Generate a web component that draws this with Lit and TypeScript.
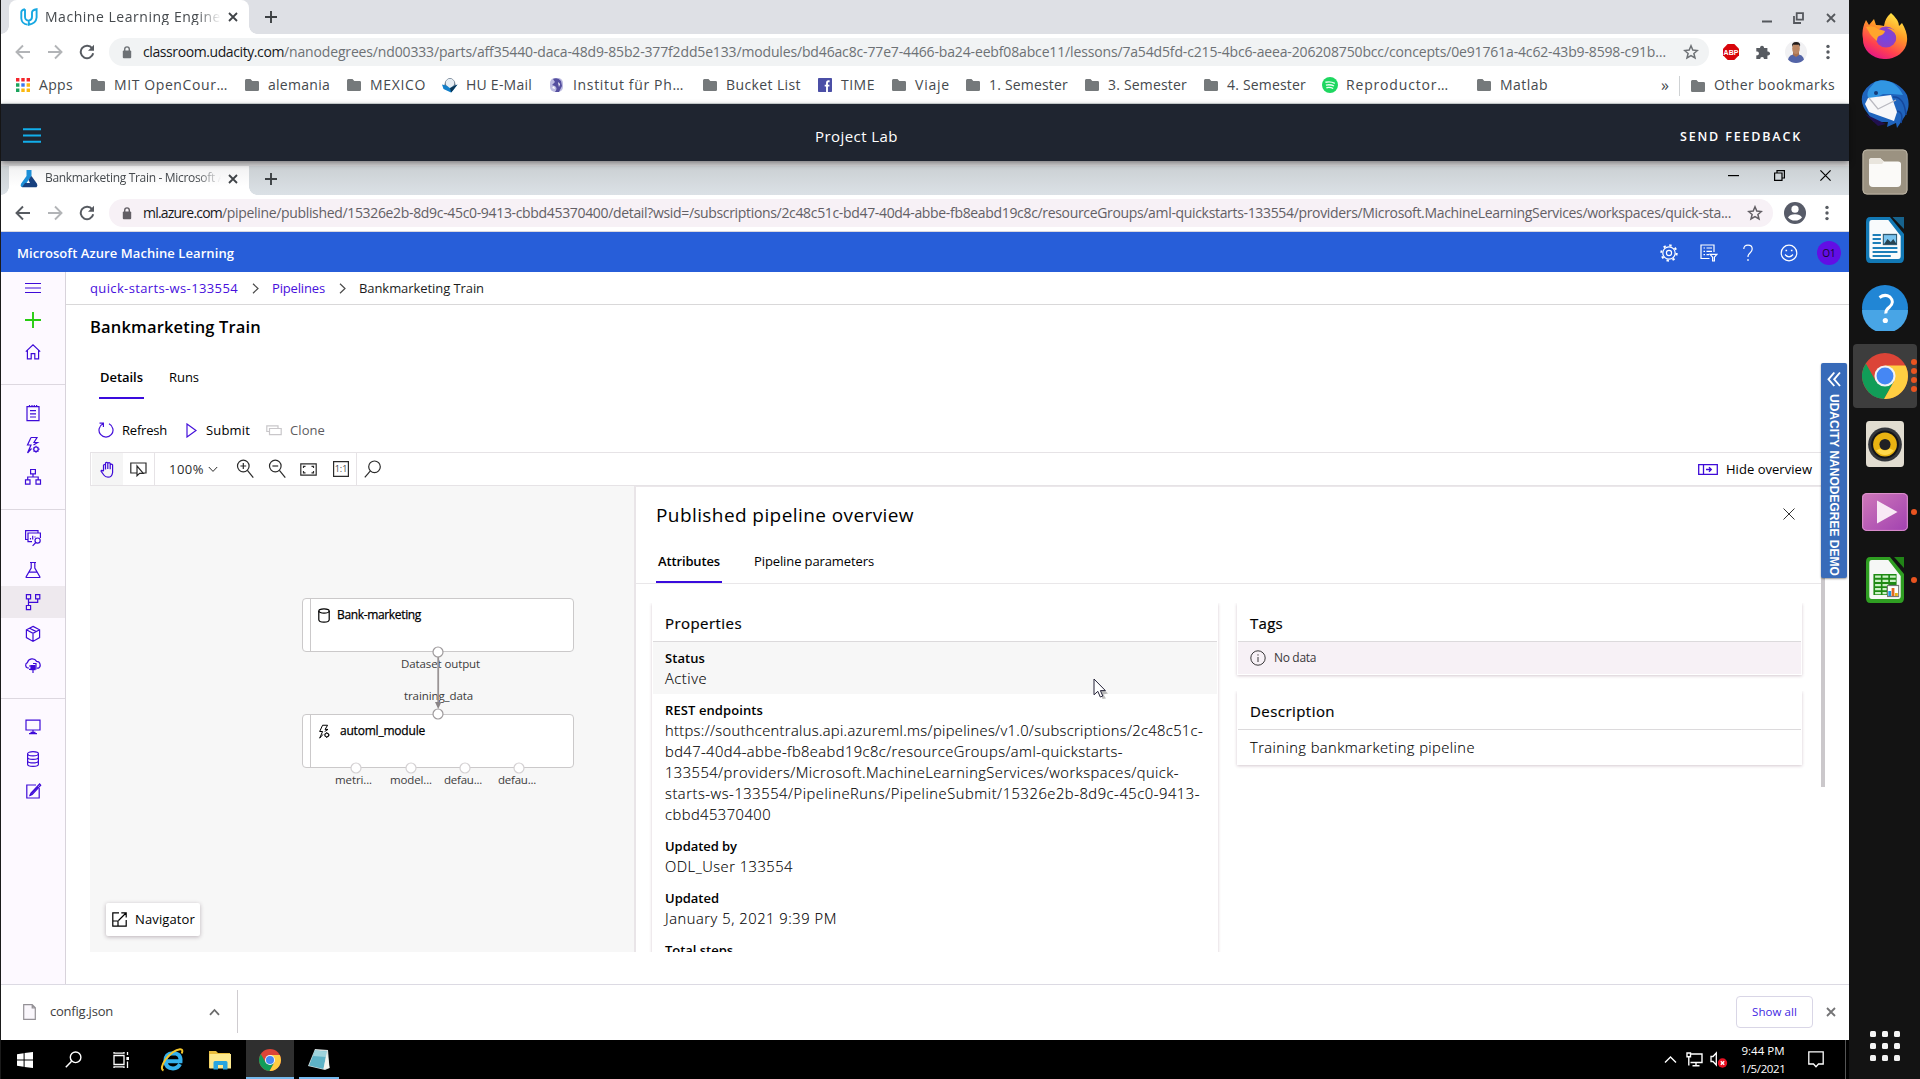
import { LitElement, html, css, svg, SVGTemplateResult, nothing } from "lit";
import { customElement, property } from "lit/decorators.js";

/** One line of text whose tracking is spread so that it fills a given width. */
@customElement("fit-text")
export class FitText extends LitElement {
  @property({ type: Number }) w = 0;
  static styles = css`
    :host { display: inline-block; white-space: pre; flex: none; }
  `;
  render() {
    return html`<slot></slot>`;
  }
  firstUpdated() {
    const count = (this.textContent ?? "").length;
    const natural = this.getBoundingClientRect().width;
    if (this.w && count) {
      this.style.letterSpacing = `${(this.w - natural) / count}px`;
    }
  }
}

const fit = (text: string, w: number, cls = "") =>
  html`<fit-text class=${cls} w=${w}>${text}</fit-text>`;

const icon = (w: number, h: number, body: SVGTemplateResult, cls = "") =>
  html`<svg class="ic ${cls}" width=${w} height=${h} viewBox="0 0 ${w} ${h}" fill="none" stroke="currentColor" stroke-width="1.2">${body}</svg>`;

const art = (size: number, w: number, h: number, body: SVGTemplateResult, cls = "") =>
  html`<svg class="ic ${cls}" width=${w} height=${h} viewBox="0 0 ${size} ${size}" preserveAspectRatio="none">${body}</svg>`;

const closeX = icon(12, 12, svg`<path d="M2 2 10 10M10 2 2 10" stroke-width="1.8"/>`);
const plus = icon(14, 14, svg`<path d="M7 1V13M1 7H13" stroke-width="1.9"/>`);
const back = icon(16, 16, svg`<path d="M15 8H2M8 1.5 1.5 8 8 14.5" stroke-width="1.9"/>`);
const forward = icon(16, 16, svg`<path d="M1 8H14M8 1.5 14.5 8 8 14.5" stroke-width="1.9"/>`);
const reload = icon(16, 16, svg`<path d="M13.2 4.3A6.3 6.3 0 1 0 14.2 9.3" stroke-width="2"/><path d="M15 .8V6.8H9Z" fill="currentColor" stroke="none"/>`);
const lock = icon(10, 13, svg`<rect x=".8" y="4.6" width="8.4" height="7.6" rx="1" fill="currentColor" stroke="none"/><path d="M2.7 5V3.2a2.3 2.3 0 0 1 4.6 0V5" stroke-width="1.4"/>`);
const star = icon(16, 16, svg`<path d="M8 1.8 9.8 6.1 14.4 6.5 10.9 9.5 12 14 8 11.6 4 14 5.1 9.5 1.6 6.5 6.2 6.1Z" stroke-width="1.5"/>`);
const dots = icon(4, 16, svg`<g fill="currentColor" stroke="none"><circle cx="2" cy="2.4" r="1.7"/><circle cx="2" cy="8" r="1.7"/><circle cx="2" cy="13.6" r="1.7"/></g>`);
const folder = icon(14, 12, svg`<path d="M0 1.5Q0 0 1.3 0H5.5L7.3 1.9H12.7Q14 1.9 14 3.2V10.7Q14 12 12.7 12H1.3Q0 12 0 10.7Z" fill="#75797b" stroke="none"/>`);
const chrome = (w: number, h: number) => art(48, w, h, svg`
  <circle cx="24" cy="24" r="24" fill="#dc4437"/>
  <path d="M4 11 14.5 29.5 33.5 29.5 23 48A24 24 0 0 1 4 11Z" fill="#119d58"/>
  <path d="M24 13H45.3A24 24 0 0 1 23 48L33.5 29.5Z" fill="#ffce42"/>
  <circle cx="24" cy="24" r="11" fill="#f3f3f3"/><circle cx="24" cy="24" r="8.8" fill="#4587f4"/>`);

const bookmarkIcons: Record<string, unknown> = {
  folder,
  apps: icon(14, 14, svg`<g stroke="none"><path d="M0 0h3.4v3.4H0zM5.3 0h3.4v3.4H5.3zM10.6 0H14v3.4h-3.4z" fill="#f4252b"/><path d="M0 5.3h3.4v3.4H0zM0 10.6h3.4V14H0z" fill="#1ba35c"/><path d="M5.3 5.3h3.4v3.4H5.3z" fill="#3b78ee"/><path d="M10.6 5.3H14v3.4h-3.4zM5.3 10.6h3.4V14H5.3zM10.6 10.6H14V14h-3.4z" fill="#fbb80f"/></g>`),
  mail: icon(16, 16, svg`<g stroke="none"><path d="M3 5Q8-3 13 5L14 10H2Z" fill="#66788a"/><circle cx="8" cy="6" r="4.3" fill="#e6edf3"/><path d="M0 7.5 4 8.5 8 11 15.5 7.5 11 13.5 9 15.5 1.5 12Z" fill="#117fca"/><path d="M8 11 15.5 7.5 9.2 15.6Z" fill="#0b3554"/></g>`),
  seal: icon(15, 16, svg`<g stroke="none"><rect x="1" y="1" width="13" height="14" rx="5" fill="#bdbbe0"/><path d="M4 2Q9 0 12 4L13 9 10 15H6Q9 11 6 9L3 8 6 5Z" fill="#554f9f"/><path d="M3 11 5 9 6 12ZM9 5l2 2-1 3z" fill="#fff"/></g>`),
  facebook: icon(14, 14, svg`<rect width="14" height="14" rx=".8" fill="#4b4fa6" stroke="none"/><path d="M11.6 3.2H10.5Q9 3.2 9 4.8V14M6.7 7.6H11.4" stroke="#fff" stroke-width="1.9"/>`),
  spotify: icon(16, 16, svg`<circle cx="8" cy="8" r="8" fill="#1ed760" stroke="none"/><path d="M3.4 5.3Q8.5 4 12.8 6.3M3.9 8.1Q8.3 7 12 9M4.4 10.7Q8 9.8 11.2 11.5" stroke="#e9fff0" stroke-width="1.4"/>`),
};

interface Bookmark { icon: string; text: string; w: number; cell: number; }
const bookmarks: Bookmark[] = [
  { icon: "apps", text: "Apps", w: 34, cell: 75 },
  { icon: "folder", text: "MIT OpenCour…", w: 114, cell: 154 },
  { icon: "folder", text: "alemania", w: 62, cell: 102 },
  { icon: "folder", text: "MEXICO", w: 56, cell: 95 },
  { icon: "mail", text: "HU E-Mail", w: 66, cell: 107 },
  { icon: "seal", text: "Institut für Ph…", w: 111, cell: 154 },
  { icon: "folder", text: "Bucket List", w: 75, cell: 115 },
  { icon: "facebook", text: "TIME", w: 34, cell: 74 },
  { icon: "folder", text: "Viaje", w: 35, cell: 74 },
  { icon: "folder", text: "1. Semester", w: 79, cell: 119 },
  { icon: "folder", text: "3. Semester", w: 79, cell: 119 },
  { icon: "folder", text: "4. Semester", w: 79, cell: 118 },
  { icon: "spotify", text: "Reproductor…", w: 103, cell: 155 },
  { icon: "folder", text: "Matlab", w: 48, cell: 100 },
];

const bolt = svg`<path d="M7 1.5H13L10 6.5H13.5L9.5 9M7 1.5 3.5 9H7L3.5 17M3.5 17 7.5 12.5"/><circle cx="12" cy="13.2" r="2.2"/><path d="M12 9.8v1.2M12 15.4v1.4M8.8 13.2h1M14.2 13.2h1.4M9.8 11l.8.8M13.5 14.7l.9.9M14.3 10.9l-.8.8M10.4 14.8l-.8.8"/>`;

const navGroups: { body: SVGTemplateResult; cls?: string }[][] = [
  [
    { body: svg`<path d="M1 4.5H17M1 9H17M1 13.5H17"/>` },
    { body: svg`<path d="M9 1V17M1 9H17" stroke-width="1.9"/>`, cls: "add" },
    { body: svg`<path d="M1.8 8.6 9 1.8 16.2 8.6M3.4 7.4V15.8H7.2V10.6H10.8V15.8H14.6V7.4"/>` },
  ],
  [
    { body: svg`<path d="M3 2.6H15V16.6H3ZM5.5 1V3M8 1V3M10.3 1V3M12.6 1V3M6 6.6H12M6 9.8H12M6 13H12"/>` },
    { body: bolt },
    { body: svg`<path d="M6.6 1.5H11.4V5.8H6.6ZM1.5 11.8H6V16.2H1.5ZM12 11.8H16.5V16.2H12ZM9 5.8V9M3.7 11.8V9H14.2V11.8"/>` },
  ],
  [
    { body: svg`<path d="M3.5 10.5H1.6V1.6H14V3.6M8 12.6H4V4H16.4V9M6.5 10.6V9M8.7 10.6V6.8M11 8.6V7.6"/><circle cx="13.6" cy="11.6" r="2.6"/><path d="M11.8 13.5 8.6 16.8"/>` },
    { body: svg`<path d="M6 1.5H12M7.2 1.5V7L2.2 15.6V16.5H15.8V15.6L10.8 7V1.5M5 11.2H13"/>` },
    { body: svg`<path d="M2.4 1.7H6.6V5.9H2.4ZM11.6 1.7H15.8V5.9H11.6ZM2.4 12.5H6.6V16.7H2.4ZM4.5 5.9V12.5M4.5 9.4H13.7V5.9"/>`, cls: "current" },
    { body: svg`<path d="M9 1.4 15.6 4.8V12.6L9 16.4 2.4 12.6V4.8ZM2.4 4.8 9 8.3 15.6 4.8M9 8.3V16.4M5.6 3.2 12.3 6.6"/>` },
    { body: svg`<path d="M5 11H3.6A2.9 2.9 0 0 1 3.4 5.6 5 5 0 0 1 12.6 4.4 3.7 3.7 0 0 1 14.5 11.2H13"/><rect x="7" y="8.6" width="4" height="4" fill="currentColor"/><path d="M5 9H9M5 12.3H9V16M9 6.5H12V12.5"/>` },
  ],
  [
    { body: svg`<path d="M2 2.2H16V12H2ZM9 12V14.5M5 15.6H13M6.5 14.3H11.5"/>` },
    { body: svg`<ellipse cx="9" cy="3.8" rx="5.4" ry="2.1"/><path d="M3.6 3.8V14.3A5.4 2.1 0 0 0 14.4 14.3V3.8M3.6 7.3A5.4 2.1 0 0 0 14.4 7.3M3.6 10.8A5.4 2.1 0 0 0 14.4 10.8"/>` },
    { body: svg`<path d="M12 3H2.8V16H15.2V6"/><path d="M15.6 2 7 11.2 6 13.5 8.2 12.6 16.7 3.2Z"/><path d="M6 13.5 14.2 4.8"/>` },
  ],
];

const magnifier = (inner: SVGTemplateResult | typeof nothing) =>
  icon(18, 20, svg`<circle cx="7.3" cy="7" r="5.8"/><path d="M11.4 11.4 17.3 18.6"/>${inner}`);

const dockIcons = [
  // Browser with the fox
  art(46, 46, 46, svg`<defs><linearGradient id="fx" x1=".8" y1="0" x2=".3" y2="1"><stop offset="0" stop-color="#fff04a"/><stop offset=".4" stop-color="#ff9a27"/><stop offset=".75" stop-color="#ff4050"/><stop offset="1" stop-color="#e31587"/></linearGradient><radialGradient id="fp"><stop offset="0" stop-color="#7047e8"/><stop offset="1" stop-color="#8f3fc4"/></radialGradient></defs>
    <path d="M29 0Q37 7 37 13L40 10Q46 20 45 28A22 19 0 0 1 1 26Q-1 17 4 7L7 12 12 6 14 12Q18 12 22 13Q23 5 29 0Z" fill="url(#fx)"/><circle cx="24" cy="24" r="10.5" fill="url(#fp)"/><path d="M4 14Q12 12 16 16L23 18Q22 22 17 23Q15 24 15 28 8 22 7 19ZM25 15Q36 15 35 27Q34 18 25 15Z" fill="#ffa52c"/>`),
  // Mail client
  art(48, 48, 48, svg`<path d="M20 0Q38 1 46 15Q50 27 44 36L36 48 35 43 26 47 27 42 13 42 7 34Q-2 23 2 13Q8 2 20 0Z" fill="#1f64bd"/><path d="M14 2Q32-4 42 15L31 14 22 14 10 20Q4 17 8 9Z" fill="#3196e3"/><path d="M7 18 30 15 36 32 33 41 8 32 4 24Z" fill="#f7f7f9"/><path d="M8 18 17 29 35 20" fill="none" stroke="#b9b9c0" stroke-width="1.3"/><path d="M4 34 25 44 17 46Z" fill="#21104f"/><path d="M32 17Q43 16 45 35M36 31Q43 32 40 43" fill="none" stroke="#15479c" stroke-width="1.5"/><circle cx="15" cy="13" r="2" fill="#163a77"/>`),
  // File manager
  art(46, 46, 46, svg`<rect x=".5" y=".5" width="45" height="45" rx="4.5" fill="#9b9281"/><rect x="1" y="1" width="44" height="44" rx="4" fill="none" stroke="#b9b1a1"/><path d="M7 12Q7 9 10 9H18L22 12.5H36Q39 12.5 39 15V34Q39 38 35 38H11Q7 38 7 34Z" fill="#fbfaf8"/><path d="M7 12Q7 9 10 9H18L22 12.5 20 15H7Z" fill="#e9e5dd"/>`),
  // Word processor
  art(46, 38, 46, svg`<path d="M5 0H29L46 17V41Q46 46 41 46H5Q0 46 0 41V5Q0 0 5 0Z" fill="#1279b5"/><path d="M5 3H27L42 19V39Q42 42 39 42H7Q4 42 4 39V6Q4 3 7 3Z" fill="#f8fbfc"/><path d="M32 0H46V12Z" fill="#17638d"/><path d="M8 18H18M8 22H18M8 26H18M8 31H38M8 35H38M8 39H30" stroke="#1d7fb9" stroke-width="1.8"/><rect x="21" y="17.5" width="16" height="10" fill="#7ac4ef" stroke="#315b72" stroke-width="1.3"/><path d="m22 27 4-5 4 3 3-3 4 5z" fill="#284351"/>`),
  // Help
  art(46, 46, 46, svg`<circle cx="23" cy="23" r="23" fill="#2186d5"/><path d="M0 25H46A23 23 0 0 1 0 25Z" fill="#48a5e6"/><path d="M17.5 12.5Q23 8.5 28 12 33 17 27.5 22 23.5 25 23.8 28.5" fill="none" stroke="#fff" stroke-width="3"/><circle cx="23.3" cy="35.5" r="2.6" fill="#fff"/>`),
  chrome(46, 46),
  // Music player
  art(46, 38, 46, svg`<rect width="46" height="46" rx="4" fill="#e2ddd1"/><g transform="translate(23 23.5) scale(1.2 1)"><circle r="17" fill="#34363b"/><circle r="14" fill="#151518"/><circle r="12" fill="#e9b312"/><circle r="5.6" fill="#202124"/><path d="M-9 6Q0 15 9 6L5 4Q0 8-5 4Z" fill="#ffd84c"/></g>`),
  // Video player
  art(46, 46, 38, svg`<defs><linearGradient id="vd" x1="0" y1="0" x2="1" y2="1"><stop offset="0" stop-color="#cf78ba"/><stop offset="1" stop-color="#a141b0"/></linearGradient></defs><rect width="46" height="46" rx="5" fill="url(#vd)"/><rect x=".7" y=".7" width="44.6" height="44.6" rx="4.5" fill="none" stroke="#df98cf"/><path d="M15 9 35.5 23 15 37Z" fill="#f8e9f5"/>`),
  // Spreadsheet
  art(46, 38, 46, svg`<path d="M5 0H29L46 17V41Q46 46 41 46H5Q0 46 0 41V5Q0 0 5 0Z" fill="#2f9e22"/><path d="M5 3H27L42 19V39Q42 42 39 42H7Q4 42 4 39V6Q4 3 7 3Z" fill="#f6f7f6"/><path d="M34 0H46V11Z" fill="#218417"/><rect x="9" y="17" width="28" height="21" fill="#1e8a13"/><path d="M11 18.5h7v2.3h-7zM20 18.5h7v2.3h-7zM29 18.5h7v2.3h-7zM11 22.7h7V25h-7zM20 22.7h7V25h-7zM29 22.7h7V25h-7zM11 27h7v2.2h-7zM20 27h7v2.2h-7zM11 31h7v2.2h-7zM20 31h5v2.2h-5zM11 35h7v2.2h-7zM20 35h5v2.2h-5z" fill="#cdf2c8"/><rect x="26" y="28.5" width="13.5" height="11" fill="#fff" stroke="#777" stroke-width="1.2"/><path d="M27 34h3.5v5H27z" fill="#1d93dc"/><path d="M31 31h3.4v8H31z" fill="#df6b25"/><path d="M35 36h3.5v3H35z" fill="#e8b315"/>`),
];

const endpointLines: [string, number][] = [
  ["https://southcentralus.api.azureml.ms/pipelines/v1.0/subscriptions/2c48c51c-", 538],
  ["bd47-40d4-abbe-fb8eabd19c8c/resourceGroups/aml-quickstarts-", 458],
  ["133554/providers/Microsoft.MachineLearningServices/workspaces/quick-", 514],
  ["starts-ws-133554/PipelineRuns/PipelineSubmit/15326e2b-8d9c-45c0-9413-", 535],
  ["cbbd45370400", 106],
];

const properties: { name: string; nw: number; lines: [string, number][] }[] = [
  { name: "Status", nw: 40, lines: [["Active", 42]] },
  { name: "REST endpoints", nw: 98, lines: endpointLines },
  { name: "Updated by", nw: 72, lines: [["ODL_User 133554", 128]] },
  { name: "Updated", nw: 54, lines: [["January 5, 2021 9:39 PM", 172]] },
  { name: "Total steps", nw: 68, lines: [] },
];

@customElement("app-root")
export class AppRoot extends LitElement {
  static styles = css`
    :host { display: block; width: 1920px; height: 1079px; overflow: hidden; font-family: "Open Sans", "Noto Sans", sans-serif; font-size: 13px; line-height: 1.2; color: #000; }
    * { box-sizing: border-box; }
    .ic { display: block; flex: none; }
    .screen { display: flex; height: 1079px; }
    .desktop { position: relative; width: 1849px; height: 1079px; border-left: 1px solid #1b1b1b; display: flex; flex-direction: column; background: #fff; }
    .row { display: flex; align-items: center; }

    /* browser frames */
    .strip { display: flex; height: 34px; flex: none; background: #dee0e5; padding-left: 8px; }
    .tab { position: relative; width: 240px; background: #fff; border-radius: 8px 8px 0 0; display: flex; align-items: center; padding-left: 11px; color: #45494d; }
    .tab::before, .tab::after { content: ""; position: absolute; bottom: 0; width: 8px; height: 8px; }
    .tab::before { left: -8px; background: radial-gradient(circle at 0 0, transparent 7.5px, #fff 8px); }
    .tab::after { right: -8px; background: radial-gradient(circle at 100% 0, transparent 7.5px, #fff 8px); }
    .tab-title { margin-left: 7px; width: 176px; overflow: hidden; font-size: 14px; -webkit-mask-image: linear-gradient(90deg, #000 86%, transparent 100%); }
    .tab-close { margin-left: 6px; color: #3f4347; }
    .new-tab { align-self: center; margin-left: 15px; color: #3c4043; }
    .win { margin-left: auto; display: flex; align-items: center; color: #55585d; }
    .outer .win { gap: 20px; padding-right: 12px; padding-top: 1px; }
    .inner .strip { height: 29px; background: linear-gradient(#cbd0d3, #dbe1e6); }
    .inner .tab { border-radius: 0; background: linear-gradient(#f1f1f2, #fff 70%); }
    .inner .tab-title { font-size: 12px; }
    .inner .tab, .inner .new-tab { padding-bottom: 4px; }
    .inner .win { gap: 35px; padding: 0 18px 11px 0; color: #000; }
    .bar { display: flex; align-items: center; height: 36px; flex: none; padding-left: 14px; color: #575b61; }
    .nav-btns { display: flex; gap: 16px; width: 94px; }
    .dim { opacity: .45; }
    .pill { display: flex; align-items: center; height: 28px; width: 1600px; border-radius: 14px; background: #f1f3f4; padding: 0 10px 0 13px; font-size: 14px; color: #6d7175; }
    .pill .host { color: #16181b; margin-left: 11px; }
    .pill > :last-child { margin-left: auto; }
    .inner .bar { height: 37px; border-bottom: 1px solid #d9d8df; }
    .inner .pill { width: 1664px; background: #f7f1f6; color: #635f65; }
    .extras { display: flex; align-items: center; margin-left: 14px; }
    .abp { width: 16px; height: 16px; margin-right: 16px; }
    .bookmarks { display: flex; height: 34px; flex: none; align-items: center; padding: 0 0 2px 15px; font-size: 14px; color: #45494d; border-bottom: 1px solid #d4dadb; }
    .bm { display: flex; align-items: center; gap: 9px; }
    .bm.wide { gap: 8px; }
    .bm:first-child { gap: 9px; }
    .more { margin-left: 84px; width: 18px; font-size: 16px; }
    .other { display: flex; align-items: center; gap: 9px; border-left: 1px solid #cfd2d4; padding-left: 11px; height: 20px; }
    .lab { position: relative; display: grid; grid-template-columns: 1fr 1fr 1fr; align-items: center; height: 57px; flex: none; background: #1f2530; color: #fff; padding: 6px 47px 0 22px; box-shadow: 0 2px 6px rgba(0,0,0,.45); z-index: 1; }
    .lab .mid { justify-self: start; margin-left: 199px; font-size: 15px; }
    .lab .end { justify-self: end; font-weight: 600; font-size: 12.5px; padding-top: 1px; }
    .lab-gap { height: 5px; flex: none; background: #d7d6d8; }

    /* azure */
    .azure { display: flex; align-items: center; height: 40px; flex: none; background: #275ed9; color: #fff; padding: 1px 8px 0 16px; }
    .azure .brand { font-weight: 600; font-size: 13px; padding-top: 2px; }
    .azure .tools { margin-left: auto; display: flex; align-items: center; }
    .avatar { width: 24px; height: 24px; border-radius: 50%; background: #620ee5; color: #14062d; font-size: 10px; display: flex; align-items: center; justify-content: center; }
    .body { display: flex; height: 712px; flex: none; }
    .side { width: 65px; background: #fdf9ff; border-right: 1px solid #d8d3db; color: #3e0bd8; }
    .group { padding: 12px 0 16px; border-bottom: 1px solid #ddd8e0; }
    .group:first-child { padding-top: 0; }
    .group:last-child { border-bottom: 0; }
    .side-item { height: 32px; display: flex; align-items: center; justify-content: center; }
    .side-item.add { color: #27cc11; }
    .side-item.current { background: #eee9ee; }
    .main { flex: 1; min-width: 0; display: flex; flex-direction: column; }
    .crumbs { display: flex; align-items: center; height: 33px; border-bottom: 1px solid #d9d8d9; padding: 1px 0 0 24px; font-size: 13px; color: #1c1c1c; }
    .crumbs .link { color: #4710dc; }
    .crumbs .sep { margin: 0 13px 0 14px; color: #4a4a4a; }
    .page { padding: 0 28px 0 24px; }
    h1, h2, h3 { margin: 0; font-weight: 600; }
    h1 { display: flex; align-items: center; height: 44px; font-size: 16.5px; }
    .tabs { display: flex; }
    .page-tabs { height: 50px; padding-left: 9px; gap: 25px; }
    .page-tabs > div { display: flex; align-items: center; padding-top: 8px; }
    .page-tabs .on { width: 45px; padding-left: 1px; font-weight: 600; box-shadow: inset 0 -2px #3a0bdd; }
    .actions { height: 53px; padding: 10px 0 0 8px; display: flex; align-items: center; }
    .actions svg { color: #4410da; }
    .actions .off, .actions .off svg { color: #5e5c5f; }
    .actions .off svg { color: #c9c7ca; }
    .g-tools { display: flex; align-items: center; height: 34px; border: solid #e6e3e6; border-width: 1px 0 1px 1px; color: #2b2b2b; }
    .g-tools .hand { display: flex; align-items: center; justify-content: center; height: 32px; width: 31px; margin-left: 1px; background: #f5f5f5; color: #3e0bd8; }
    .g-tools fit-text { padding-top: 2px; }
    .vline { width: 1px; height: 32px; background: #e6e3e6; }
    .hide { margin-left: auto; display: flex; align-items: center; gap: 8px; padding-right: 9px; color: #000; }
    .work { display: flex; height: 466px; }
    .canvas { position: relative; width: 544px; background: #f7f7f7; }
    .canvas > * { position: absolute; }
    .node { width: 272px; height: 54px; left: 212px; background: #fff; border: 1px solid #cbc9ca; border-radius: 4px; display: flex; font-size: 12px; padding-left: 7px; }
    .node .inner-node { border-left: 1px solid #cbc9ca; flex: 1; display: flex; height: 52px; padding: 9px 0 0 7px; gap: 7px; align-items: flex-start; -webkit-text-stroke: .25px; }
    .n1 { top: 112px; } .n2 { top: 228px; }
    .wires { left: 0; top: 0; }
    .lb { font-size: 11.5px; color: #3c3c3c; line-height: 14px; }
    .l1 { left: 311px; top: 171px; } .l2 { left: 314px; top: 203px; }
    .p1 { left: 245px; top: 287px; } .p2 { left: 300px; top: 287px; } .p3 { left: 354px; top: 287px; } .p4 { left: 408px; top: 287px; }
    .navigator { left: 16px; top: 417px; width: 94px; height: 33px; background: #fff; border-radius: 2px; box-shadow: 0 1px 4px rgba(60,30,50,.32); display: flex; align-items: center; gap: 8px; padding-left: 6px; }
    .panel { flex: 1; border-left: 2px solid #e9e5e8; border-top: 1px solid #ebe7ea; background: #fff; overflow: hidden; }
    .panel-head { height: 57px; display: flex; align-items: center; justify-content: space-between; padding: 0 26px 0 20px; }
    .panel-head .ic { margin-bottom: 4px; }
    h2 { font-size: 19px; font-weight: 500; }
    .panel-tabs { height: 40px; border-bottom: 1px solid #e9e7e9; padding-left: 20px; gap: 32px; font-size: 13px; }
    .panel-tabs > div { display: flex; align-items: center; padding-bottom: 4px; }
    .panel-tabs .on { width: 66px; padding-left: 2px; font-weight: 600; box-shadow: inset 0 -2px #3a0bdd; }
    .cards { display: grid; grid-template-columns: 566px 565px; gap: 19px; padding: 19px 0 0 16px; align-items: start; }
    .card-props { min-height: 360px; }
    .stack { display: grid; gap: 16px; }
    .card { background: #fff; padding: 0 1px 1px; box-shadow: 0 1px 3px rgba(80,30,60,.24); clip-path: inset(0 -4px -5px -4px); }
    h3 { height: 39px; display: flex; align-items: center; padding-left: 12px; border-bottom: 1px solid #dcdadc; font-size: 15px; font-weight: 500; -webkit-text-stroke: .2px; padding-top: 1px; }
    .prop { padding: 7px 0 0 12px; height: 52px; }
    .prop.long { height: 136px; }
    .prop:first-of-type { background: #f7f7f7; }
    .prop .name { display: block; height: 19px; line-height: 19px; font-size: 13px; font-weight: 600; }
    .prop .line, .desc { display: block; height: 21px; line-height: 21px; font-size: 14.7px; font-weight: 300; color: #000; -webkit-text-stroke: .12px; }
    .none { display: flex; align-items: center; gap: 8px; padding-left: 12px; height: 32px; background: #f7f1f6; font-size: 12px; color: #3a383a; }
    .descbox { height: 34px; padding: 7px 0 0 12px; }
    .scroll { position: absolute; left: 1820px; top: 570px; width: 4px; height: 217px; background: #cbc8cb; }
    .demo { position: absolute; left: 1820px; top: 363px; width: 26px; height: 215px; background: #386bb9; border-radius: 2px; color: #fff; display: flex; flex-direction: column; align-items: center; padding-top: 8px; gap: 6px; box-shadow: 0 1px 2px rgba(0,0,0,.4); }
    .demo span { writing-mode: vertical-rl; font: 700 12px/14px "Liberation Sans", Arial, sans-serif; white-space: nowrap; }
    .pointer { position: absolute; left: 1092px; top: 678px; }

    .downloads { display: flex; align-items: center; height: 56px; flex: none; border-top: 1px solid #dcdae3; padding: 0 12px 2px 22px; }
    .file { display: flex; align-items: center; width: 215px; height: 43px; border-right: 1px solid #cfccd0; color: #3e3e40; font-size: 13px; padding-right: 17px; }
    .file fit-text { margin-left: 14px; }
    .file > :last-child { margin-left: auto; }
    .show-all { margin-left: auto; margin-right: 12px; width: 77px; height: 32px; border: 1px solid #d9d6e6; border-radius: 4px; color: #4127e2; font-size: 11.5px; display: flex; align-items: center; justify-content: center; }
    .close-bar { color: #747476; }
    .taskbar { display: flex; height: 39px; flex: none; background: #000; color: #fff; align-items: center; }
    .task { display: flex; align-items: center; justify-content: center; width: 48px; height: 39px; }
    .task.first-app { margin-left: 3px; }
    .task.on { background: #2f2f2f; border-bottom: 2px solid #76b9ed; padding-top: 2px; margin-left: 2px; }
    .task.run { width: 40px; margin-left: 5px; border-bottom: 2px solid #76b9ed; padding-top: 2px; }
    .tray { margin-left: auto; display: flex; align-items: center; height: 39px; }
    .clock { width: 60px; display: flex; flex-direction: column; align-items: center; font-size: 11.5px; line-height: 18px; margin: 0 15px 0 5px; }
    .peek { width: 4px; height: 39px; border-left: 1px solid #555; margin-left: 21px; }

    .dock { width: 71px; height: 1079px; background: #131313; display: flex; flex-direction: column; padding: 3.5px 0 0 4px; flex: none; }
    .slot { position: relative; width: 64px; height: 64px; margin-bottom: 4.1px; display: flex; align-items: center; justify-content: center; border-radius: 4px; flex: none; }
    .slot.on { background: #3d3d3d; }
    .pips { position: absolute; right: 0; top: 0; height: 64px; display: flex; flex-direction: column; justify-content: center; gap: 3px; }
    .pips i { width: 6px; height: 6px; border-radius: 50%; background: #e95420; display: block; }
    .launcher { margin: auto 0 18px 17px; display: grid; grid-template-columns: repeat(3, 6px); gap: 6px; }
    .launcher i { width: 6px; height: 6px; border-radius: 1.5px; background: #f3f3f3; }
  `;

  private outer() {
    return html`<div class="outer">
      <div class="strip">
        <div class="tab">
          ${icon(18, 18, svg`<path d="M5 1.2Q1.3 2 1.3 4V10.5Q1.8 16 7.5 16.6M5 1.2V9Q5.3 12.6 8.8 12.6 12 12 12 9V4.5Q12 2 16.6 1.2V9.5Q16 15.5 8.8 16.8V12.8" stroke="#17a8e2" stroke-width="1.9"/>`)}
          <div class="tab-title">${fit("Machine Learning Engine", 176)}</div>
          <span class="tab-close">${closeX}</span>
        </div>
        <span class="new-tab">${plus}</span>
        <div class="win">
          ${icon(12, 12, svg`<path d="M1 9.5H11" stroke-width="2"/>`)}
          ${icon(12, 12, svg`<path d="M3.7 1.2H10V7.7H3.7ZM1 4V11H8" stroke-width="1.8"/>`)}
          ${closeX}
        </div>
      </div>
      <div class="bar">
        <div class="nav-btns"><span class="dim">${back}</span><span class="dim">${forward}</span>${reload}</div>
        <div class="pill">${lock}${fit("classroom.udacity.com", 141, "host")}${fit("/nanodegrees/nd00333/parts/aff35440-daca-48d9-85b2-377f2dd5e133/modules/bd46ac8c-77e7-4466-ba24-eebf08abce11/lessons/7a54d5fd-c215-4bc6-aeea-206208750bcc/concepts/0e91761a-4c62-43b9-8598-c91b…", 1382)}${star}</div>
        <div class="extras">
          <svg class="abp" viewBox="0 0 16 16"><path d="M4.7 0H11.3L16 4.7V11.3L11.3 16H4.7L0 11.3V4.7Z" fill="#d8050b"/><text x="8" y="10.7" text-anchor="middle" font-family="Liberation Sans" font-weight="700" font-size="7" fill="#fff">ABP</text></svg>
          ${icon(16, 16, svg`<path d="M1.3 4H5A2 2 0 1 1 9 3.6V4H12.4V7.6A2 2 0 1 1 12.4 11.4V15H9A1.8 1.8 0 1 0 5.2 15H1.3V11.3A2 2 0 1 0 1.3 7.5Z" fill="currentColor" stroke="none"/>`)}
          <svg class="ic photo" width="22" height="22" viewBox="0 0 22 22" style="margin:0 19px 0 14px"><defs><clipPath id="ph"><circle cx="11" cy="11" r="11"/></clipPath></defs><g clip-path="url(#ph)"><rect width="22" height="22" fill="#f1f1f3"/><path d="M3 22Q2 15 8 13.5H14Q20 15 19 22Z" fill="#5364a7"/><path d="M8 10H14V14L11 16 8 14Z" fill="#a97150"/><ellipse cx="11" cy="7.5" rx="3.8" ry="5.5" fill="#bc8764"/><path d="M7 6Q6.4 1 11.2 1T15 6L14 3.8H8Z" fill="#211b1a"/></g></svg>
          ${dots}
        </div>
      </div>
      <div class="bookmarks">
        ${bookmarks.map((b) => html`<div class="bm ${b.icon === "mail" || b.icon === "spotify" ? "wide" : ""}" style="width:${b.cell}px">${bookmarkIcons[b.icon]}${fit(b.text, b.w)}</div>`)}
        <span class="more">»</span>
        <div class="other">${folder}${fit("Other bookmarks", 121)}</div>
      </div>
    </div>`;
  }

  private inner() {
    return html`<div class="inner">
      <div class="strip">
        <div class="tab">
          ${icon(18, 18, svg`<g stroke="none"><path d="M6.5 0H11.5V6L8.5 10 4 17H1.5Q0 16 1 13.8L6.5 6Z" fill="#1c8fd8"/><path d="M11.5 6 17 13.8Q18 16 16.5 17.3H2L5 13H10L8.5 10 10 7.5Z" fill="#17407f"/></g>`)}
          <div class="tab-title">${fit("Bankmarketing Train - Microsoft A", 180)}</div>
          <span class="tab-close">${closeX}</span>
        </div>
        <span class="new-tab">${plus}</span>
        <div class="win">
          ${icon(11, 11, svg`<path d="M0 5.6H11" />`)}
          ${icon(11, 11, svg`<path d="M.6 3H8V10.4H.6ZM3 3V.6H10.4V8H8"/>`)}
          ${icon(11, 11, svg`<path d="M.4.4 10.6 10.6M10.6.4.4 10.6"/>`)}
        </div>
      </div>
      <div class="bar">
        <div class="nav-btns">${back}<span class="dim">${forward}</span>${reload}</div>
        <div class="pill">${lock}${fit("ml.azure.com", 79, "host")}${fit("/pipeline/published/15326e2b-8d9c-45c0-9413-cbbd45370400/detail?wsid=/subscriptions/2c48c51c-bd47-40d4-abbe-fb8eabd19c8c/resourceGroups/aml-quickstarts-133554/providers/Microsoft.MachineLearningServices/workspaces/quick-sta...", 1509)}${star}</div>
        <div class="extras" style="margin-left:11px">
          <svg class="ic" width="22" height="22" viewBox="0 0 22 22" style="margin-right:19px"><circle cx="11" cy="11" r="11" fill="#575b68"/><circle cx="11" cy="7.2" r="3.6" fill="#fff"/><path d="M4 15.5Q6 12.2 11 12.2T18 15.5Q15.5 18.6 11 18.6T4 15.5Z" fill="#fff"/></svg>
          ${dots}
        </div>
      </div>
    </div>`;
  }

  private azureBar() {
    return html`<div class="azure">
      ${fit("Microsoft Azure Machine Learning", 217, "brand")}
      <div class="tools">
        ${icon(18, 18, svg`<circle cx="9" cy="9" r="2.6"/><circle cx="9" cy="9" r="6.2"/><circle cx="9" cy="9" r="7.7" stroke-width="2" stroke-dasharray="2.4 3.65"/>`)}
        <span style="width:22px"></span>
        ${icon(18, 18, svg`<path d="M14 8V1H1V14.5H9.5M3.5 4H5M6.5 4H12M3.5 7.3H5M6.5 7.3H12M3.5 10.6H5M6.5 10.6H9M10 10.3H17L14.4 13.2V17H12.6V13.2Z"/>`)}
        <span style="width:24px"></span>
        ${icon(12, 18, svg`<path d="M1.8 5Q1.8 1.2 6 1.2T10.2 5Q10.2 7 8 9T6 13M6 15V17"/>`)}
        <span style="width:26px"></span>
        ${icon(18, 18, svg`<circle cx="9" cy="9" r="7.8"/><path d="M5 10.5Q9 15.2 13 10.5"/><path d="M6.3 5.7V7.3M11.7 5.7V7.3" stroke-width="1.6"/>`)}
        <span style="width:19px"></span>
        <div class="avatar">O1</div>
      </div>
    </div>`;
  }

  private canvas() {
    const port = (x: number, y: number, c: string) => svg`<circle cx=${x} cy=${y} r="5" fill="#fff" stroke=${c} stroke-width="1.2"/>`;
    return html`<div class="canvas">
      <div class="node n1"><div class="inner-node">${icon(12, 15, svg`<ellipse cx="6" cy="3" rx="5.2" ry="2.2"/><path d="M.8 3V11.8Q1 14.2 6 14.2T11.2 11.8V3"/>`)}${fit("Bank-marketing", 84)}</div></div>
      <div class="node n2"><div class="inner-node">${html`<svg class="ic" width="15" height="15" viewBox="2 0 17 18" fill="none" stroke="currentColor" stroke-width="1.2">${bolt}</svg>`}${fit("automl_module", 85)}</div></div>
      ${fit("Dataset output", 79, "lb l1")}${fit("training_data", 69, "lb l2")}
      ${fit("metri...", 37, "lb p1")}${fit("model...", 42, "lb p2")}${fit("defau...", 38, "lb p3")}${fit("defau...", 38, "lb p4")}
      <svg class="wires" width="544" height="466">
        <path d="M348.2 170V220" stroke="#9a9495" stroke-width="1.8"/><path d="M345 216H351.4L348.2 223Z" fill="#8a8587"/>
        ${port(348, 166, "#9f9b9d")}${port(348, 228, "#9f9b9d")}
        ${[266, 321, 375, 429].map((x) => port(x, 282, "#d4d1d3"))}
      </svg>
      <div class="navigator">${icon(15, 15, svg`<path d="M7 .8H.8V14.2H14.2V8M.8 9H6V14.2M6.5 8.5 14 1M9.3.8H14.2V5.6"/>`)}${fit("Navigator", 60)}</div>
    </div>`;
  }

  private panel() {
    return html`<div class="panel">
      <div class="panel-head"><h2>${fit("Published pipeline overview", 258)}</h2>${icon(12, 12, svg`<path d="M.5.5 11.5 11.5M11.5.5.5 11.5" stroke="#333" stroke-width="1"/>`)}</div>
      <div class="tabs panel-tabs"><div class="on">${fit("Attributes", 62)}</div><div>${fit("Pipeline parameters", 120)}</div></div>
      <div class="cards">
        <div class="card card-props"><h3>${fit("Properties", 77)}</h3>
          ${properties.map((p) => html`<div class="prop ${p.lines.length > 1 ? "long" : ""}"><span class="name">${fit(p.name, p.nw)}</span>${p.lines.map(([t, w]) => html`<span class="line">${fit(t, w)}</span>`)}</div>`)}
        </div>
        <div class="stack">
          <div class="card"><h3>${fit("Tags", 33)}</h3><div class="none">${icon(16, 16, svg`<circle cx="8" cy="8" r="7.2" stroke-width="1"/><path d="M8 7V12M8 4.3V5.6" stroke-width="1"/>`)}${fit("No data", 42)}</div></div>
          <div class="card"><h3>${fit("Description", 85)}</h3><div class="descbox"><span class="desc">${fit("Training bankmarketing pipeline", 225)}</span></div></div>
        </div>
      </div>
    </div>`;
  }

  private page() {
    const sep = html`<span class="sep">${icon(7, 11, svg`<path d="M1 .8 6 5.5 1 10.2"/>`)}</span>`;
    const gap = (n: number) => html`<span style="width:${n}px"></span>`;
    return html`<div class="body">
      <div class="side">${navGroups.map((g) => html`<div class="group">${g.map((i) => html`<div class="side-item ${i.cls ?? ""}">${icon(18, 18, i.body)}</div>`)}</div>`)}</div>
      <div class="main">
        <div class="crumbs">${fit("quick-starts-ws-133554", 148, "link")}${sep}${fit("Pipelines", 53, "link")}${sep}${fit("Bankmarketing Train", 125)}</div>
        <div class="page">
          <h1>${fit("Bankmarketing Train", 171)}</h1>
          <div class="tabs page-tabs"><div class="on">${fit("Details", 43)}</div><div>${fit("Runs", 30)}</div></div>
          <div class="actions">
            ${icon(16, 17, svg`<path d="M5 1.8A7 7 0 1 0 11 1.8M1.5 1.2H5.4V5"/>`)}${gap(8)}${fit("Refresh", 45)}${gap(19)}
            ${icon(11, 15, svg`<path d="M1 1V14L10 7.5Z"/>`)}${gap(9)}${fit("Submit", 44)}${gap(16)}
            <span class="row off">${icon(16, 11, svg`<path d="M3 6.5H.8V.8H12V3M3.5 3.5H15.2V9.6H3.5Z"/>`)}${gap(8)}${fit("Clone", 35)}</span>
          </div>
          <div class="g-tools">
            <div class="hand">${icon(15, 17, svg`<path d="M3.5 10V4.2Q4.5 2.8 5.5 4.2V8.5M5.5 4.5V2Q6.7.6 7.8 2V8M7.8 2.3Q9 .8 10.2 2.3V8.3M10.2 3.8Q11.4 2.6 12.6 3.8V11.5Q12 16.2 8 16.2 5.2 16.2 3.8 14L1 10.2Q1.2 8.6 3.5 10.4"/>`)}</div>
            ${gap(7)}${icon(17, 15, svg`<path d="M7 11H.8V1H16V11H13.5M7 4V13.8L9.6 11.4H13.3Z"/>`)}${gap(7)}<span class="vline"></span>
            ${gap(14)}${fit("100%", 35)}${gap(4)}${icon(10, 7, svg`<path d="M.8 1 5 5.4 9.2 1" stroke-width="1"/>`)}
            ${gap(18)}${magnifier(svg`<path d="M4.4 7H10.2M7.3 4.1V9.9"/>`)}${gap(14)}${magnifier(svg`<path d="M4.4 7H10.2"/>`)}
            ${gap(14)}${icon(17, 13, svg`<path d="M.8.8H16.2V12.2H.8ZM3.5 5V3.3H5.5M11.5 3.3H13.5V5M13.5 8V9.8H11.5M5.5 9.8H3.5V8"/>`)}
            ${gap(16)}<svg class="ic" width="16" height="16" viewBox="0 0 16 16"><path d="M.6.6H15.4V15.4H.6Z" fill="none" stroke="#2b2b2b" stroke-width="1.2"/><text x="8" y="11.4" text-anchor="middle" font-family="Open Sans" font-size="9" fill="#444">1:1</text></svg>
            ${gap(7)}<span class="vline"></span>${gap(7)}
            ${icon(17, 18, svg`<circle cx="10.5" cy="6.8" r="5.8"/><path d="M6.4 10.9.8 17.4"/>`)}
            <div class="hide">${icon(20, 11, svg`<path d="M.7.7H19.3V10.3H.7ZM5.5.7V10.3M8 5.5H13M11 3.2 13.3 5.5 11 7.8" stroke="#3e0bd8" stroke-width="1.3"/>`)}${fit("Hide overview", 86)}</div>
          </div>
          <div class="work">${this.canvas()}${this.panel()}</div>
        </div>
      </div>
    </div>`;
  }

  private footer() {
    return html`<div class="downloads">
        <div class="file">${icon(13, 16, svg`<path d="M.7.7H9.2L12.3 3.8V15.3H.7ZM9.2.7V3.8H12.3" stroke="#949196" fill="#faf7fc"/>`)}${fit("config.json", 63)}${icon(11, 8, svg`<path d="M1 6.8 5.5 2 10 6.8" stroke="#6b6b6b" stroke-width="1.8"/>`)}</div>
        <div class="show-all">${fit("Show all", 45)}</div>
        <span class="close-bar">${closeX}</span>
      </div>
      <div class="taskbar">
        <div class="task">${icon(16, 16, svg`<path d="M0 2.2 6.6 1.3V7.5H0ZM7.6 1.1 16 0V7.5H7.6ZM0 8.5H6.6V14.7L0 13.8ZM7.6 8.5H16V16L7.6 14.9Z" fill="#fff" stroke="none"/>`)}</div>
        <div class="task">${icon(17, 17, svg`<circle cx="10.6" cy="6.3" r="5.3" stroke-width="1.4"/><path d="M6.6 10.3.8 16.3" stroke-width="1.5"/>`)}</div>
        <div class="task">${icon(17, 16, svg`<path d="M1 3.5H11V12.5H1ZM1 0V1.2H11V0M1 16V14.8H11V16M14.5 0V3M14.5 9.5V16" stroke-width="1.3"/><path d="M13.4 5H16V8H13.4Z" fill="#fff" stroke="none"/>`)}</div>
        <div class="task first-app">${icon(24, 24, svg`<path d="M5.5 13.2H20.5Q21 5.2 13 5.2 5.3 5.6 5.3 13.2 5.8 20.5 13 20.5 18 20.3 20 16.2" stroke="#35b2ee" stroke-width="4"/><path d="M3.5 22.5Q-.5 20.5 5.5 11.5 13 2 20 1.2 23.5 1 21.8 5.5" stroke="#f4c62c" stroke-width="2"/>`)}</div>
        <div class="task">${icon(24, 20, svg`<g stroke="none"><path d="M1 1H8L10 3H22V18H1Z" fill="#e9bd3e"/><path d="M1.5 4H23V18.5H1.5Z" fill="#fde98e"/><path d="M5.5 19.5V12.5Q5.5 11 7 11H18Q19.5 11 19.5 12.5V19.5H15V15H10V19.5Z" fill="#27a5e0"/></g>`)}</div>
        <div class="task on">${chrome(22, 22)}</div>
        <div class="task run">${icon(24, 23, svg`<g stroke="none"><path d="M8 1 21 2 22.5 20 18 22 1 18Z" fill="#d5dedf"/><path d="M8 2.5 20 3.5 16.5 21 2 17.5Z" fill="#5eb2c6"/><path d="M8 2.5 20 3.5 19 9 6 8Z" fill="#9ed3dc"/><path d="M20 3.5 22.5 20 16.5 21Z" fill="#f4f4ee"/></g>`)}</div>
        <div class="tray">
          ${icon(13, 9, svg`<path d="M1 7.5 6.5 2 12 7.5" stroke-width="1.4"/>`)}<span style="width:9px"></span>
          ${icon(17, 15, svg`<path d="M5 2H16V10.5H4.5M10 10.5V13.5M6.5 13.7H13.5M1 1H4.5V4.8H1ZM2.8 4.8V13.5" stroke-width="1.4"/>`)}<span style="width:7px"></span>
          ${icon(18, 17, svg`<path d="M1 5.5H3L6.3 2V14L3 10.5H1Z" stroke-width="1.3"/><circle cx="12.5" cy="12" r="4.7" fill="#e81123" stroke="none"/><path d="M10.8 10.3 14.2 13.7M14.2 10.3 10.8 13.7" stroke-width="1.4"/>`)}
          <div class="clock">${fit("9:44 PM", 43)}${fit("1/5/2021", 45)}</div>
          ${icon(16, 17, svg`<path d="M.8.8H15.2V13H10.5L8 15.8 5.5 13H.8Z" stroke-width="1.3"/>`)}
          <span class="peek"></span>
        </div>
      </div>`;
  }

  render() {
    const pips: Record<number, number> = { 5: 4, 7: 1, 8: 1 };
    return html`<div class="screen">
      <div class="desktop">
        ${this.outer()}
        <div class="lab">
          ${icon(18, 15, svg`<path d="M0 1.2H18M0 7.5H18M0 13.8H18" stroke="#12aeea" stroke-width="2"/>`)}
          ${fit("Project Lab", 83, "mid")}${fit("SEND FEEDBACK", 122, "end")}
        </div>
        <div class="lab-gap"></div>
        ${this.inner()}${this.azureBar()}${this.page()}${this.footer()}
        <div class="scroll"></div>
        <div class="demo">${icon(14, 17, svg`<path d="M7.3 1.5 1.5 8.3 7.3 15M13 1.5 7.2 8.3 13 15" stroke-width="1.9"/>`)}<span>UDACITY NANODEGREE DEMO</span></div>
        <svg class="pointer" width="16" height="22" viewBox="0 0 16 22"><path d="M2.5 3 15 15.5 10.5 16.5 13 20.5 9.5 21Z" fill="rgba(0,0,0,.25)"/><path d="M1 1V16.8L4.8 13.3 7.3 19 9.8 18 7.4 12.6H12.4Z" fill="#fff" stroke="#26243a"/></svg>
      </div>
      <div class="dock">
        ${dockIcons.map((d, i) => html`<div class="slot ${i === 5 ? "on" : ""}">${d}<div class="pips">${Array.from({ length: pips[i] ?? 0 }, () => html`<i></i>`)}</div></div>`)}
        <div class="launcher">${Array.from({ length: 9 }, () => html`<i></i>`)}</div>
      </div>
    </div>`;
  }
}
